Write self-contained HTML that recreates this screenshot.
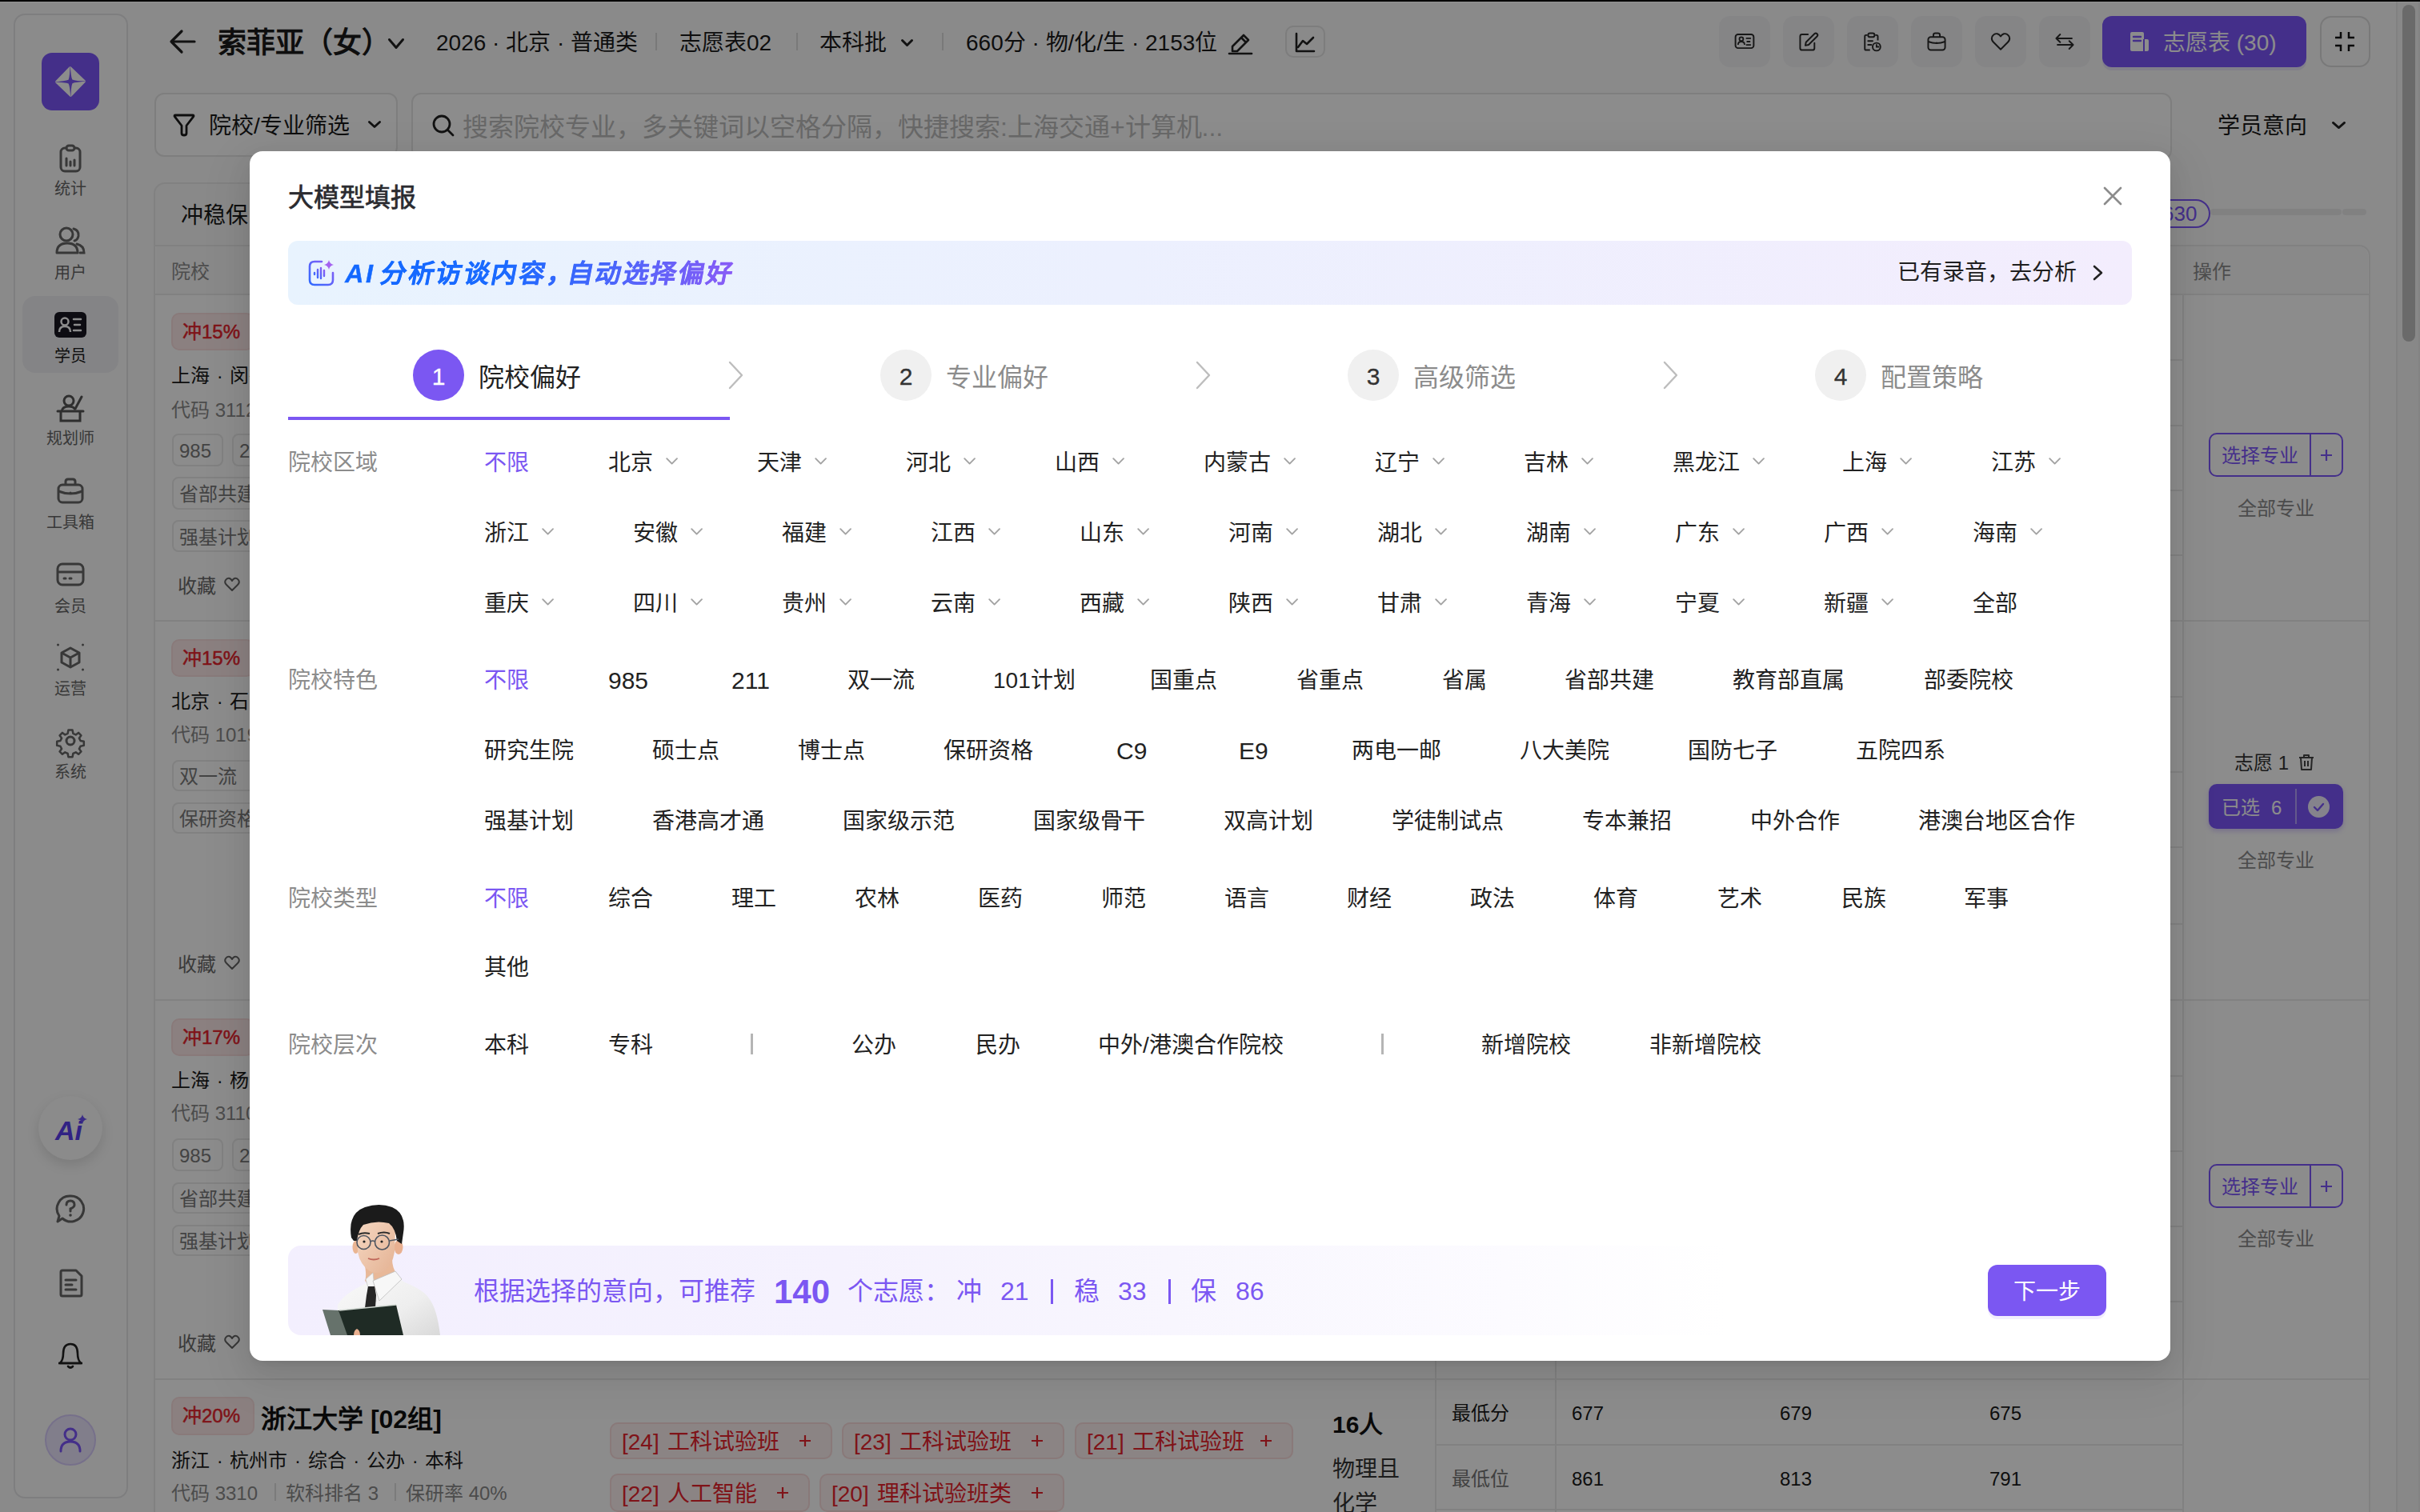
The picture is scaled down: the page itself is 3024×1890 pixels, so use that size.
<!DOCTYPE html><html lang="zh-CN"><head><meta charset="utf-8"><style>
*{box-sizing:border-box;margin:0;padding:0}
html,body{width:3024px;height:1890px;overflow:hidden;background:#fbfbfc}
body{position:relative;font-family:"Liberation Sans",sans-serif;color:#1f1f1f;font-size:28px;line-height:40px}
.a{position:absolute;white-space:nowrap}
.t28{font-size:28px;line-height:40px}
.t32{font-size:32px;line-height:40px}
svg{position:absolute;overflow:visible}
.ov{position:absolute;left:0;top:0;width:3024px;height:1890px;background:rgba(0,0,0,0.45)}
.modal{position:absolute;left:312px;top:189px;width:2400px;height:1512px;background:#fff;border-radius:16px;overflow:hidden;box-shadow:0 12px 32px 0 rgba(0,0,0,.08),0 6px 12px -8px rgba(0,0,0,.12),0 18px 56px 16px rgba(0,0,0,.05)}
.o{position:absolute;white-space:nowrap;font-size:28px;line-height:40px;color:#222}
.lab{position:absolute;white-space:nowrap;font-size:28px;line-height:40px;color:#8c8c8c}
.hl{position:absolute;background:#ececec;height:2px}
.vl{position:absolute;background:#ececec;width:2px}
.tag{position:absolute;border:2px solid #e8e8e8;border-radius:8px;color:#777;font-size:28px;line-height:37px;padding:0 12px;white-space:nowrap}
</style></head><body>
<div class="a" style="left:0;top:0;width:3024px;height:2px;background:#000;z-index:5"></div>
<div class="a" style="left:17px;top:17px;width:143px;height:1856px;border:2px solid #e6e6e8;border-radius:14px;background:#fdfdfd"></div>
<div class="a" style="left:52px;top:66px;width:72px;height:72px;background:#7c56fa;border-radius:13px"></div>
<svg style="left:52px;top:66px" width="72" height="72" viewBox="0 0 72 72"><g transform="rotate(-1 36 36)"><path d="M36 18.5 L53.5 36 L36 53.5 L18.5 36 Z" fill="#fff" stroke="#fff" stroke-width="3" stroke-linejoin="round"/><path d="M36 14 Q36.6 30 38.4 33.6 Q42 35.4 58 36 Q42 36.6 38.4 38.4 Q36.6 42 36 58 Q35.4 42 33.6 38.4 Q30 36.6 14 36 Q30 35.4 33.6 33.6 Q35.4 30 36 14Z" fill="#7c56fa"/></g></svg>
<div class="a" style="left:28px;top:370px;width:120px;height:96px;background:#f1f1f4;border-radius:16px"></div>
<div class="a" style="left:17px;width:142px;text-align:center;top:216px;font-size:20px;line-height:40px;color:#666">统计</div>
<svg style="left:73px;top:180px" width="30" height="36" viewBox="0 0 30 36"><rect x="3" y="5" width="24" height="29" rx="5" fill="none" stroke="#666" stroke-width="3"/><rect x="10" y="2" width="10" height="6" rx="3" fill="#fdfdfd" stroke="#666" stroke-width="3"/><path d="M10 18v9M15 22v5M20 20v7" stroke="#666" stroke-width="3" stroke-linecap="round"/></svg>
<div class="a" style="left:17px;width:142px;text-align:center;top:321px;font-size:20px;line-height:40px;color:#666">用户</div>
<svg style="left:69px;top:283px" width="38" height="38" viewBox="0 0 38 38"><circle cx="14" cy="10" r="8" fill="none" stroke="#666" stroke-width="3"/><path d="M2 33 Q2 21 15 21 Q28 21 28 33 Z" fill="none" stroke="#666" stroke-width="3" stroke-linejoin="round"/><path d="M23 3 Q30 5 29 12 Q28 17 24 18" fill="none" stroke="#666" stroke-width="3" stroke-linecap="round"/><path d="M27 22 Q36 24 36 33 L31 33" fill="none" stroke="#666" stroke-width="3" stroke-linecap="round"/></svg>
<div class="a" style="left:17px;width:142px;text-align:center;top:425px;font-size:20px;line-height:40px;color:#1a1a1a">学员</div>
<svg style="left:68px;top:390px" width="40" height="32" viewBox="0 0 40 32"><rect x="0" y="0" width="40" height="32" rx="6" fill="#181622"/><circle cx="13" cy="12" r="4.5" fill="none" stroke="#fff" stroke-width="2.5"/><path d="M6 25 Q6 18 13 18 Q20 18 20 25" fill="none" stroke="#fff" stroke-width="2.5"/><path d="M24 9h9M25 16h7M24 23h9" stroke="#fff" stroke-width="2.5" stroke-linecap="round"/></svg>
<div class="a" style="left:17px;width:142px;text-align:center;top:528px;font-size:20px;line-height:40px;color:#666">规划师</div>
<svg style="left:70px;top:493px" width="36" height="36" viewBox="0 0 36 36"><circle cx="16" cy="8" r="6" fill="none" stroke="#555" stroke-width="3"/><path d="M7 21 Q8 15 16 15 Q22 15 24 19" fill="none" stroke="#555" stroke-width="3"/><path d="M24 18 L32 3" stroke="#555" stroke-width="3" stroke-linecap="round"/><path d="M2 21h32" stroke="#555" stroke-width="3" stroke-linecap="round"/><path d="M6 21v12h24v-12" fill="none" stroke="#555" stroke-width="3"/></svg>
<div class="a" style="left:17px;width:142px;text-align:center;top:633px;font-size:20px;line-height:40px;color:#666">工具箱</div>
<svg style="left:71px;top:597px" width="34" height="33" viewBox="0 0 34 33"><rect x="2" y="9" width="30" height="22" rx="5" fill="none" stroke="#666" stroke-width="3"/><path d="M11 9V5Q11 2 14 2h6q3 0 3 3v4" fill="none" stroke="#666" stroke-width="3"/><path d="M2 17 Q17 23 32 17" fill="none" stroke="#666" stroke-width="3"/><circle cx="17" cy="19" r="1.5" fill="#666"/></svg>
<div class="a" style="left:17px;width:142px;text-align:center;top:738px;font-size:20px;line-height:40px;color:#666">会员</div>
<svg style="left:70px;top:703px" width="36" height="30" viewBox="0 0 36 30"><rect x="2" y="2" width="32" height="26" rx="6" fill="none" stroke="#666" stroke-width="3"/><path d="M2 12h32" stroke="#666" stroke-width="3"/><path d="M10 20h2M17 20h2" stroke="#666" stroke-width="3" stroke-linecap="round"/></svg>
<div class="a" style="left:17px;width:142px;text-align:center;top:841px;font-size:20px;line-height:40px;color:#666">运营</div>
<svg style="left:71px;top:804px" width="34" height="35" viewBox="0 0 34 35"><path d="M17 6 L28 12 L28 24 L17 30 L6 24 L6 12 Z" fill="none" stroke="#666" stroke-width="3" stroke-linejoin="round"/><path d="M6 12 L17 18 L28 12 M17 18 V30" fill="none" stroke="#666" stroke-width="3" stroke-linejoin="round"/><circle cx="1.5" cy="2" r="1.5" fill="#666"/><circle cx="32.5" cy="2" r="1.5" fill="#666"/><circle cx="1.5" cy="33" r="1.5" fill="#666"/><circle cx="32.5" cy="33" r="1.5" fill="#666"/></svg>
<div class="a" style="left:17px;width:142px;text-align:center;top:945px;font-size:20px;line-height:40px;color:#666">系统</div>
<svg style="left:70px;top:908px" width="36" height="36" viewBox="0 0 36 36"><path d="M15 2h6l1 5 4 2 4-3 4 4-3 4 2 4 5 1v6l-5 1-2 4 3 4-4 4-4-3-4 2-1 5h-6l-1-5-4-2-4 3-4-4 3-4-2-4-5-1v-6l5-1 2-4-3-4 4-4 4 3 4-2z" fill="none" stroke="#666" stroke-width="3" stroke-linejoin="round" transform="translate(18 18) scale(0.84) translate(-18 -18)"/><circle cx="18" cy="18" r="5" fill="none" stroke="#666" stroke-width="3"/></svg>
<div class="a" style="left:48px;top:1370px;width:80px;height:80px;background:#fdfdfd;border-radius:50%;box-shadow:0 6px 16px rgba(0,0,0,0.12)"></div>
<div class="a" style="left:69px;top:1393px;font-size:34px;line-height:40px;font-weight:bold;font-style:italic;color:#5a3ff0">Ai</div>
<svg style="left:97px;top:1393px" width="12" height="12" viewBox="0 0 14 14"><path d="M7 0 Q8 6 14 7 Q8 8 7 14 Q6 8 0 7 Q6 6 7 0Z" fill="#6a4ff5"/></svg>
<svg style="left:70px;top:1493px" width="36" height="36" viewBox="0 0 36 36"><path d="M18 2 A16 16 0 1 1 8 30 L2 34 L4 27 A16 16 0 0 1 18 2Z" fill="none" stroke="#666" stroke-width="3" stroke-linejoin="round"/><path d="M13 13 Q13 8 18 8 Q23 8 23 13 Q23 16 18 18 V21" fill="none" stroke="#666" stroke-width="3" stroke-linecap="round"/><circle cx="18" cy="26" r="1.8" fill="#666"/></svg>
<svg style="left:73px;top:1586px" width="31" height="36" viewBox="0 0 31 36"><path d="M3 4 Q3 2 5 2 H22 L29 9 V32 Q29 34 27 34 H5 Q3 34 3 32Z" fill="none" stroke="#666" stroke-width="3" stroke-linejoin="round"/><path d="M9 14h13M9 20h8M9 26h13" stroke="#666" stroke-width="3" stroke-linecap="round"/></svg>
<svg style="left:71px;top:1676px" width="34" height="36" viewBox="0 0 34 36"><path d="M4 28 Q8 24 8 16 Q8 4 17 4 Q26 4 26 16 Q26 24 30 28 Z" fill="none" stroke="#222" stroke-width="2.6" stroke-linejoin="round"/><path d="M2 28h30" stroke="#222" stroke-width="2.6"/><path d="M14 32 Q17 35 20 32" fill="none" stroke="#222" stroke-width="2.6" stroke-linecap="round"/></svg>
<div class="a" style="left:56px;top:1768px;width:64px;height:64px;background:#ece6fe;border:2px solid #d8ccfc;border-radius:50%"></div>
<svg style="left:74px;top:1784px" width="28" height="32" viewBox="0 0 28 32"><circle cx="14" cy="9" r="7" fill="none" stroke="#7c56fa" stroke-width="3"/><path d="M2 30 Q2 18 14 18 Q26 18 26 30" fill="none" stroke="#7c56fa" stroke-width="3" stroke-linecap="round"/></svg>
<svg style="left:211px;top:36px" width="34" height="32" viewBox="0 0 34 32"><path d="M32 16H3M16 3L3 16L16 29" fill="none" stroke="#222" stroke-width="3.2" stroke-linecap="round" stroke-linejoin="round"/></svg>
<div class="a" style="left:272px;top:34.0px;font-size:36px;line-height:40px;color:#1a1a1a;font-weight:bold;">索菲亚（女）</div>
<svg style="left:485px;top:48px" width="20" height="13"><polyline points="1.5,1.5 10.0,11.5 18.5,1.5" fill="none" stroke="#222" stroke-width="3" stroke-linecap="round" stroke-linejoin="round"/></svg>
<div class="a" style="left:545px;top:34.0px;font-size:28px;line-height:40px;color:#1a1a1a;font-weight:normal;">2026 · 北京 · 普通类</div>
<div class="a" style="left:819px;top:41px;width:2px;height:22px;background:#ddd"></div>
<div class="a" style="left:995px;top:41px;width:2px;height:22px;background:#ddd"></div>
<div class="a" style="left:1177px;top:41px;width:2px;height:22px;background:#ddd"></div>
<div class="a" style="left:849px;top:34.0px;font-size:28px;line-height:40px;color:#1a1a1a;font-weight:normal;">志愿表02</div>
<div class="a" style="left:1024px;top:34.0px;font-size:28px;line-height:40px;color:#1a1a1a;font-weight:normal;">本科批</div>
<svg style="left:1126px;top:49px" width="15" height="9"><polyline points="1.5,1.5 7.5,7.5 13.5,1.5" fill="none" stroke="#222" stroke-width="3" stroke-linecap="round" stroke-linejoin="round"/></svg>
<div class="a" style="left:1207px;top:34.0px;font-size:28px;line-height:40px;color:#1a1a1a;font-weight:normal;">660分 · 物/化/生 · 2153位</div>
<svg style="left:1534px;top:36px" width="32" height="32" viewBox="0 0 32 32"><path d="M6 22 L20 8 L26 14 L12 28 H6 Z" fill="none" stroke="#222" stroke-width="2.6" stroke-linejoin="round"/><path d="M17 11 L23 17" stroke="#222" stroke-width="2.6"/><path d="M2 31h28" stroke="#222" stroke-width="2.6" stroke-linecap="round"/></svg>
<div class="a" style="left:1606px;top:32px;width:50px;height:40px;border:2px solid #e3e3e3;border-radius:10px"></div>
<svg style="left:1618px;top:40px" width="26" height="26" viewBox="0 0 26 26"><path d="M2 2V24H24" fill="none" stroke="#222" stroke-width="2.6" stroke-linecap="round" stroke-linejoin="round"/><path d="M4 19 L10 11 L15 15 L23 7" fill="none" stroke="#222" stroke-width="2.6" stroke-linecap="round" stroke-linejoin="round"/></svg>
<div class="a" style="left:2148px;top:20px;width:64px;height:64px;background:#f3f3f5;border-radius:14px"></div>
<div class="a" style="left:2228px;top:20px;width:64px;height:64px;background:#f3f3f5;border-radius:14px"></div>
<div class="a" style="left:2308px;top:20px;width:64px;height:64px;background:#f3f3f5;border-radius:14px"></div>
<div class="a" style="left:2388px;top:20px;width:64px;height:64px;background:#f3f3f5;border-radius:14px"></div>
<div class="a" style="left:2468px;top:20px;width:64px;height:64px;background:#f3f3f5;border-radius:14px"></div>
<div class="a" style="left:2548px;top:20px;width:64px;height:64px;background:#f3f3f5;border-radius:14px"></div>
<svg style="left:2167px;top:39px" width="26" height="26" viewBox="0 0 32 32"><rect x="2" y="5" width="28" height="21" rx="4" fill="none" stroke="#2a2a2a" stroke-width="2.4"/><circle cx="11" cy="12" r="3" fill="none" stroke="#2a2a2a" stroke-width="2.2"/><path d="M6 21 Q6 16 11 16 Q16 16 16 21" fill="none" stroke="#2a2a2a" stroke-width="2.2"/><path d="M19 11h6M20 16h4M19 21h6" stroke="#2a2a2a" stroke-width="2.2" stroke-linecap="round"/></svg>
<svg style="left:2247px;top:39px" width="26" height="26" viewBox="0 0 32 32"><path d="M15 5H6Q3 5 3 8V26Q3 29 6 29H22Q25 29 25 26V18" fill="none" stroke="#2a2a2a" stroke-width="2.4" stroke-linecap="round"/><path d="M11 22 L12 17 L25 4 Q27 2 29 4 Q31 6 29 8 L16 21 Z" fill="none" stroke="#2a2a2a" stroke-width="2.4" stroke-linejoin="round"/></svg>
<svg style="left:2327px;top:39px" width="26" height="26" viewBox="0 0 32 32"><path d="M8 6H6Q4 6 4 8V27Q4 29 6 29H12" fill="none" stroke="#2a2a2a" stroke-width="2.4"/><path d="M20 6H22Q24 6 24 8V14" fill="none" stroke="#2a2a2a" stroke-width="2.4"/><rect x="9" y="3" width="10" height="6" rx="3" fill="none" stroke="#2a2a2a" stroke-width="2.4"/><path d="M9 15h7M9 21h5" stroke="#2a2a2a" stroke-width="2.4" stroke-linecap="round"/><circle cx="22" cy="24" r="6" fill="none" stroke="#2a2a2a" stroke-width="2.4"/><path d="M22 20v4h4" fill="none" stroke="#2a2a2a" stroke-width="2.2"/></svg>
<svg style="left:2407px;top:39px" width="26" height="26" viewBox="0 0 32 32"><rect x="3" y="9" width="26" height="20" rx="4" fill="none" stroke="#2a2a2a" stroke-width="2.4"/><path d="M11 9V6Q11 3 14 3h4q3 0 3 3v3" fill="none" stroke="#2a2a2a" stroke-width="2.4"/><path d="M3 16 Q16 21 29 16" fill="none" stroke="#2a2a2a" stroke-width="2.4"/><circle cx="16" cy="18" r="1.3" fill="#2a2a2a"/></svg>
<svg style="left:2487px;top:39px" width="26" height="26" viewBox="0 0 32 32"><path d="M16 28 L5 17 Q1 13 3 8 Q6 3 11 4 Q14 5 16 8 Q18 5 21 4 Q26 3 29 8 Q31 13 27 17 Z" fill="none" stroke="#2a2a2a" stroke-width="2.4" stroke-linejoin="round"/></svg>
<svg style="left:2567px;top:39px" width="26" height="26" viewBox="0 0 32 32"><path d="M4 11H27M9 5 L3 11 L9 17" fill="none" stroke="#2a2a2a" stroke-width="2.4" stroke-linecap="round" stroke-linejoin="round"/><path d="M28 21H5M23 15 L29 21 L23 27" fill="none" stroke="#2a2a2a" stroke-width="2.4" stroke-linecap="round" stroke-linejoin="round"/></svg>
<div class="a" style="left:2627px;top:20px;width:255px;height:64px;background:#7d57fc;border-radius:12px;box-shadow:0 4px 0 rgba(125,87,252,0.12)"></div>
<svg style="left:2660px;top:39px" width="26" height="26" viewBox="0 0 26 26"><path d="M2 3Q2 1 4 1H17Q19 1 19 3V10H23Q25 10 25 12V23Q25 25 23 25H4Q2 25 2 23Z" fill="#fff"/><path d="M6 7h9M6 12h9" stroke="#7d57fc" stroke-width="2.4" stroke-linecap="round"/><path d="M19 10V25" stroke="#7d57fc" stroke-width="2"/></svg>
<div class="a" style="left:2703px;top:34.0px;font-size:28px;line-height:40px;color:#fff;font-weight:normal;">志愿表 (30)</div>
<div class="a" style="left:2899px;top:20px;width:63px;height:64px;border:2px solid #dcdcdc;border-radius:14px"></div>
<svg style="left:2916px;top:38px" width="28" height="28" viewBox="0 0 28 28"><path d="M9 2V9H2M19 2V9H26M9 26V19H2M19 26V19H26" fill="none" stroke="#111" stroke-width="2.5"/></svg>
<div class="a" style="left:2995px;top:0px;width:29px;height:1890px;background:#f8f8f8"></div>
<div class="a" style="left:2994px;top:0px;width:2px;height:1890px;background:#ececec"></div>
<div class="a" style="left:3022px;top:0px;width:2px;height:1890px;background:#eeeeee"></div>
<div class="a" style="left:3002px;top:6px;width:16px;height:421px;background:#c2c2c2;border-radius:8px"></div>
<div class="a" style="left:193px;top:116px;width:304px;height:80px;border:2px solid #e6e6e6;border-radius:12px;background:#fff"></div>
<svg style="left:216px;top:141px" width="28" height="30" viewBox="0 0 28 30"><path d="M3.5 3 Q1 3 2.6 5.2 L11 16 V25.5 Q11 28 14 28 Q17 28 17 25.5 V16 L25.4 5.2 Q27 3 24.5 3 Z" fill="none" stroke="#1a1a1a" stroke-width="2.8" stroke-linejoin="round"/></svg>
<div class="a" style="left:261px;top:138.0px;font-size:28px;line-height:40px;color:#1a1a1a;font-weight:normal;">院校/专业筛选</div>
<svg style="left:460px;top:151px" width="16" height="9"><polyline points="1.4,1.4 8.0,7.6 14.6,1.4" fill="none" stroke="#222" stroke-width="2.8" stroke-linecap="round" stroke-linejoin="round"/></svg>
<div class="a" style="left:514px;top:116px;width:2200px;height:84px;border:2px solid #e6e6e6;border-radius:12px;background:#fff"></div>
<svg style="left:540px;top:143px" width="28" height="28" viewBox="0 0 28 28"><circle cx="12" cy="12" r="10" fill="none" stroke="#222" stroke-width="2.8"/><path d="M19.5 19.5L26 26" stroke="#222" stroke-width="2.8" stroke-linecap="round"/></svg>
<div class="a" style="left:578px;top:138.5px;font-size:32px;line-height:40px;color:#bdbdbd;font-weight:normal;">搜索院校专业，多关键词以空格分隔，快捷搜索:上海交通+计算机...</div>
<div class="a" style="left:2771px;top:138.0px;font-size:28px;line-height:40px;color:#1a1a1a;font-weight:normal;">学员意向</div>
<svg style="left:2914px;top:152px" width="17" height="9"><polyline points="1.4,1.4 8.5,7.6 15.6,1.4" fill="none" stroke="#222" stroke-width="2.8" stroke-linecap="round" stroke-linejoin="round"/></svg>
<div class="a" style="left:192px;top:228px;width:2508px;height:172px;border:2px solid #ececec;border-bottom:none;border-radius:14px 14px 0 0;background:#fafafa"></div>
<div class="a" style="left:226px;top:249.5px;font-size:28px;line-height:40px;color:#1a1a1a;font-weight:normal;">冲稳保</div>
<div class="a" style="left:2640px;top:249px;width:122px;height:36px;border:2px solid #7d57fc;border-radius:18px;background:#fff"></div>
<div class="a" style="left:2702px;top:246.5px;font-size:26px;line-height:40px;color:#7d57fc;font-weight:normal;">630</div>
<div class="a" style="left:2762px;top:261px;width:164px;height:8px;background:#ececec;border-radius:4px"></div>
<div class="a" style="left:2927px;top:261px;width:30px;height:8px;background:#ececec;border-radius:4px"></div>
<div class="a" style="left:192px;top:306px;width:2770px;height:1594px;border:2px solid #ececec;border-radius:0 14px 0 0;background:#fff"></div>
<div class="a" style="left:195px;top:308px;width:2764px;height:60px;background:#fafafa;border-radius:0 12px 0 0"></div>
<div class="a" style="left:192px;top:367px;width:2769px;height:2px;background:#ececec"></div>
<div class="a" style="left:214px;top:320.0px;font-size:24px;line-height:40px;color:#8c8c8c;font-weight:normal;">院校</div>
<div class="a" style="left:2740px;top:320.0px;font-size:24px;line-height:40px;color:#8c8c8c;font-weight:normal;">操作</div>
<div class="a" style="left:1793px;top:369px;width:2px;height:1521px;background:#ececec"></div>
<div class="a" style="left:1943px;top:369px;width:2px;height:1521px;background:#ececec"></div>
<div class="a" style="left:2727px;top:369px;width:2px;height:1521px;background:#ececec"></div>
<div class="a" style="left:192px;top:775px;width:2769px;height:2px;background:#ececec"></div>
<div class="a" style="left:192px;top:1249px;width:2769px;height:2px;background:#ececec"></div>
<div class="a" style="left:192px;top:1723px;width:2769px;height:2px;background:#ececec"></div>
<div class="a" style="left:1794px;top:449px;width:934px;height:2px;background:#ececec"></div>
<div class="a" style="left:1794px;top:530.5px;width:934px;height:2.0px;background:#ececec"></div>
<div class="a" style="left:1794px;top:611.5px;width:934px;height:2.0px;background:#ececec"></div>
<div class="a" style="left:1794px;top:693px;width:934px;height:2px;background:#ececec"></div>
<div class="a" style="left:1794px;top:870px;width:934px;height:2px;background:#ececec"></div>
<div class="a" style="left:1794px;top:964px;width:934px;height:2px;background:#ececec"></div>
<div class="a" style="left:1794px;top:1058px;width:934px;height:2px;background:#ececec"></div>
<div class="a" style="left:1794px;top:1154px;width:934px;height:2px;background:#ececec"></div>
<div class="a" style="left:1794px;top:1344px;width:934px;height:2px;background:#ececec"></div>
<div class="a" style="left:1794px;top:1438px;width:934px;height:2px;background:#ececec"></div>
<div class="a" style="left:1794px;top:1532px;width:934px;height:2px;background:#ececec"></div>
<div class="a" style="left:1794px;top:1626px;width:934px;height:2px;background:#ececec"></div>
<div class="a" style="left:1794px;top:1805px;width:934px;height:2px;background:#ececec"></div>
<div class="a" style="left:1794px;top:1886px;width:934px;height:2px;background:#ececec"></div>
<div class="a" style="left:214px;top:391px;width:104px;height:47px;background:#fdeaea;border:2px solid #f9dede;border-radius:10px"></div>
<div class="a" style="left:228px;top:394.5px;font-size:24px;line-height:40px;color:#e8232d;font-weight:normal;-webkit-text-stroke:0.5px #e8232d">冲15%</div>
<div class="a" style="left:214px;top:449.5px;font-size:24px;line-height:40px;color:#1a1a1a;font-weight:normal;word-spacing:2px">上海 · 闵行区 · 综合 · 公办</div>
<div class="a" style="left:214px;top:492.5px;font-size:24px;line-height:40px;color:#8a8a8a;font-weight:normal;">代码 3112</div>
<div class="a" style="left:215px;top:542px;width:64px;height:41px;border:2px solid #ebebeb;border-radius:8px;background:#fff"></div>
<div class="a" style="left:224px;top:544.0px;font-size:24px;line-height:40px;color:#7a7a7a;font-weight:normal;">985</div>
<div class="a" style="left:290px;top:542px;width:64px;height:41px;border:2px solid #ebebeb;border-radius:8px;background:#fff"></div>
<div class="a" style="left:299px;top:544.0px;font-size:24px;line-height:40px;color:#7a7a7a;font-weight:normal;">211</div>
<div class="a" style="left:215px;top:596px;width:134px;height:41px;border:2px solid #ebebeb;border-radius:8px;background:#fff"></div>
<div class="a" style="left:224px;top:598.0px;font-size:24px;line-height:40px;color:#7a7a7a;font-weight:normal;">省部共建</div>
<div class="a" style="left:215px;top:650px;width:134px;height:40px;border:2px solid #ebebeb;border-radius:8px;background:#fff"></div>
<div class="a" style="left:224px;top:651.5px;font-size:24px;line-height:40px;color:#7a7a7a;font-weight:normal;">强基计划</div>
<div class="a" style="left:222px;top:712.5px;font-size:24px;line-height:40px;color:#6a6a6a;font-weight:normal;">收藏</div>
<svg style="left:280px;top:721px" width="20" height="20" viewBox="0 0 20 20"><path d="M10 17 L3 10 Q0 7 2 4 Q4 1 7 2 Q9 3 10 5 Q11 3 13 2 Q16 1 18 4 Q20 7 17 10 Z" fill="none" stroke="#666" stroke-width="2" stroke-linejoin="round"/></svg>
<div class="a" style="left:214px;top:799px;width:104px;height:47px;background:#fdeaea;border:2px solid #f9dede;border-radius:10px"></div>
<div class="a" style="left:228px;top:802.5px;font-size:24px;line-height:40px;color:#e8232d;font-weight:normal;-webkit-text-stroke:0.5px #e8232d">冲15%</div>
<div class="a" style="left:214px;top:857.0px;font-size:24px;line-height:40px;color:#1a1a1a;font-weight:normal;word-spacing:2px">北京 · 石景山区 · 理工 · 公办</div>
<div class="a" style="left:214px;top:898.5px;font-size:24px;line-height:40px;color:#8a8a8a;font-weight:normal;">代码 1019</div>
<div class="a" style="left:215px;top:950px;width:115px;height:39px;border:2px solid #ebebeb;border-radius:8px;background:#fff"></div>
<div class="a" style="left:224px;top:951.0px;font-size:24px;line-height:40px;color:#7a7a7a;font-weight:normal;">双一流</div>
<div class="a" style="left:215px;top:1003px;width:134px;height:39px;border:2px solid #ebebeb;border-radius:8px;background:#fff"></div>
<div class="a" style="left:224px;top:1004.0px;font-size:24px;line-height:40px;color:#7a7a7a;font-weight:normal;">保研资格</div>
<div class="a" style="left:222px;top:1185.5px;font-size:24px;line-height:40px;color:#6a6a6a;font-weight:normal;">收藏</div>
<svg style="left:280px;top:1194px" width="20" height="20" viewBox="0 0 20 20"><path d="M10 17 L3 10 Q0 7 2 4 Q4 1 7 2 Q9 3 10 5 Q11 3 13 2 Q16 1 18 4 Q20 7 17 10 Z" fill="none" stroke="#666" stroke-width="2" stroke-linejoin="round"/></svg>
<div class="a" style="left:214px;top:1273px;width:104px;height:47px;background:#fdeaea;border:2px solid #f9dede;border-radius:10px"></div>
<div class="a" style="left:228px;top:1276.5px;font-size:24px;line-height:40px;color:#e8232d;font-weight:normal;-webkit-text-stroke:0.5px #e8232d">冲17%</div>
<div class="a" style="left:214px;top:1331.0px;font-size:24px;line-height:40px;color:#1a1a1a;font-weight:normal;word-spacing:2px">上海 · 杨浦区 · 综合 · 公办</div>
<div class="a" style="left:214px;top:1372.0px;font-size:24px;line-height:40px;color:#8a8a8a;font-weight:normal;">代码 3110</div>
<div class="a" style="left:215px;top:1423px;width:64px;height:41px;border:2px solid #ebebeb;border-radius:8px;background:#fff"></div>
<div class="a" style="left:224px;top:1425.0px;font-size:24px;line-height:40px;color:#7a7a7a;font-weight:normal;">985</div>
<div class="a" style="left:290px;top:1423px;width:64px;height:41px;border:2px solid #ebebeb;border-radius:8px;background:#fff"></div>
<div class="a" style="left:299px;top:1425.0px;font-size:24px;line-height:40px;color:#7a7a7a;font-weight:normal;">211</div>
<div class="a" style="left:215px;top:1478px;width:134px;height:39px;border:2px solid #ebebeb;border-radius:8px;background:#fff"></div>
<div class="a" style="left:224px;top:1479.0px;font-size:24px;line-height:40px;color:#7a7a7a;font-weight:normal;">省部共建</div>
<div class="a" style="left:215px;top:1531px;width:134px;height:39px;border:2px solid #ebebeb;border-radius:8px;background:#fff"></div>
<div class="a" style="left:224px;top:1532.0px;font-size:24px;line-height:40px;color:#7a7a7a;font-weight:normal;">强基计划</div>
<div class="a" style="left:222px;top:1660.0px;font-size:24px;line-height:40px;color:#6a6a6a;font-weight:normal;">收藏</div>
<svg style="left:280px;top:1668px" width="20" height="20" viewBox="0 0 20 20"><path d="M10 17 L3 10 Q0 7 2 4 Q4 1 7 2 Q9 3 10 5 Q11 3 13 2 Q16 1 18 4 Q20 7 17 10 Z" fill="none" stroke="#666" stroke-width="2" stroke-linejoin="round"/></svg>
<div class="a" style="left:214px;top:1746px;width:104px;height:48px;background:#fdeaea;border:2px solid #f9dede;border-radius:10px"></div>
<div class="a" style="left:228px;top:1750.0px;font-size:24px;line-height:40px;color:#e8232d;font-weight:normal;-webkit-text-stroke:0.5px #e8232d">冲20%</div>
<div class="a" style="left:326px;top:1753.5px;font-size:32px;line-height:40px;color:#111;font-weight:bold;">浙江大学 [02组]</div>
<div class="a" style="left:214px;top:1805.5px;font-size:24px;line-height:40px;color:#1a1a1a;font-weight:normal;word-spacing:2px">浙江 · 杭州市 · 综合 · 公办 · 本科</div>
<div class="a" style="left:214px;top:1846.5px;font-size:24px;line-height:40px;color:#8a8a8a;font-weight:normal;">代码 3310</div>
<div class="a" style="left:343px;top:1854px;width:2px;height:22px;background:#e0e0e0"></div>
<div class="a" style="left:357px;top:1846.5px;font-size:24px;line-height:40px;color:#8a8a8a;font-weight:normal;">软科排名 3</div>
<div class="a" style="left:493px;top:1854px;width:2px;height:22px;background:#e0e0e0"></div>
<div class="a" style="left:507px;top:1846.5px;font-size:24px;line-height:40px;color:#8a8a8a;font-weight:normal;">保研率 40%</div>
<div class="a" style="left:762px;top:1778px;width:278px;height:46px;background:#fdf0f0;border:2px solid #f9dcdc;border-radius:10px"></div>
<div class="a" style="left:777px;top:1782.5px;font-size:28px;line-height:40px;color:#e8232d;font-weight:normal;word-spacing:3px">[24] 工科试验班</div>
<svg style="left:998px;top:1793.0px" width="16" height="16" viewBox="0 0 16 16"><path d="M8 1V15M1 8H15" stroke="#e8232d" stroke-width="2.2"/></svg>
<div class="a" style="left:1052px;top:1778px;width:278px;height:46px;background:#fdf0f0;border:2px solid #f9dcdc;border-radius:10px"></div>
<div class="a" style="left:1067px;top:1782.5px;font-size:28px;line-height:40px;color:#e8232d;font-weight:normal;word-spacing:3px">[23] 工科试验班</div>
<svg style="left:1288px;top:1793.0px" width="16" height="16" viewBox="0 0 16 16"><path d="M8 1V15M1 8H15" stroke="#e8232d" stroke-width="2.2"/></svg>
<div class="a" style="left:1343px;top:1778px;width:273px;height:46px;background:#fdf0f0;border:2px solid #f9dcdc;border-radius:10px"></div>
<div class="a" style="left:1358px;top:1782.5px;font-size:28px;line-height:40px;color:#e8232d;font-weight:normal;word-spacing:3px">[21] 工科试验班</div>
<svg style="left:1574px;top:1793.0px" width="16" height="16" viewBox="0 0 16 16"><path d="M8 1V15M1 8H15" stroke="#e8232d" stroke-width="2.2"/></svg>
<div class="a" style="left:762px;top:1842px;width:250px;height:48px;background:#fdf0f0;border:2px solid #f9dcdc;border-radius:10px"></div>
<div class="a" style="left:777px;top:1847.5px;font-size:28px;line-height:40px;color:#e8232d;font-weight:normal;word-spacing:3px">[22] 人工智能</div>
<svg style="left:970px;top:1858.0px" width="16" height="16" viewBox="0 0 16 16"><path d="M8 1V15M1 8H15" stroke="#e8232d" stroke-width="2.2"/></svg>
<div class="a" style="left:1024px;top:1842px;width:306px;height:48px;background:#fdf0f0;border:2px solid #f9dcdc;border-radius:10px"></div>
<div class="a" style="left:1039px;top:1847.5px;font-size:28px;line-height:40px;color:#e8232d;font-weight:normal;word-spacing:3px">[20] 理科试验班类</div>
<svg style="left:1288px;top:1858.0px" width="16" height="16" viewBox="0 0 16 16"><path d="M8 1V15M1 8H15" stroke="#e8232d" stroke-width="2.2"/></svg>
<div class="a" style="left:1665px;top:1760.5px;font-size:30px;line-height:40px;color:#111;font-weight:bold;">16人</div>
<div class="a" style="left:1665px;top:1817.0px;font-size:28px;line-height:40px;color:#333;font-weight:normal;">物理且</div>
<div class="a" style="left:1665px;top:1859.5px;font-size:28px;line-height:40px;color:#333;font-weight:normal;">化学</div>
<div class="a" style="left:1814px;top:1746.5px;font-size:24px;line-height:40px;color:#1a1a1a;font-weight:normal;">最低分</div>
<div class="a" style="left:1814px;top:1828.5px;font-size:24px;line-height:40px;color:#777;font-weight:normal;">最低位</div>
<div class="a" style="left:1964px;top:1746.5px;font-size:24px;line-height:40px;color:#1a1a1a;font-weight:normal;">677</div>
<div class="a" style="left:1964px;top:1828.5px;font-size:24px;line-height:40px;color:#1a1a1a;font-weight:normal;">861</div>
<div class="a" style="left:2224px;top:1746.5px;font-size:24px;line-height:40px;color:#1a1a1a;font-weight:normal;">679</div>
<div class="a" style="left:2224px;top:1828.5px;font-size:24px;line-height:40px;color:#1a1a1a;font-weight:normal;">813</div>
<div class="a" style="left:2486px;top:1746.5px;font-size:24px;line-height:40px;color:#1a1a1a;font-weight:normal;">675</div>
<div class="a" style="left:2486px;top:1828.5px;font-size:24px;line-height:40px;color:#1a1a1a;font-weight:normal;">791</div>
<div class="a" style="left:2760px;top:541px;width:168px;height:55px;border:2px solid #7d57fc;border-radius:10px;background:#fff"></div>
<div class="a" style="left:2886px;top:541px;width:2px;height:55px;background:#7d57fc"></div>
<div class="a" style="left:2776px;top:550.0px;font-size:24px;line-height:40px;color:#7d57fc;font-weight:normal;">选择专业</div>
<svg style="left:2899px;top:560.5px" width="16" height="16" viewBox="0 0 16 16"><path d="M8 1V15M1 8H15" stroke="#7d57fc" stroke-width="2.2"/></svg>
<div class="a" style="left:2796px;top:616.0px;font-size:24px;line-height:40px;color:#8a8a8a;font-weight:normal;">全部专业</div>
<div class="a" style="left:2792px;top:934.0px;font-size:24px;line-height:40px;color:#333;font-weight:normal;">志愿 1</div>
<svg style="left:2871px;top:942px" width="22" height="22" viewBox="0 0 22 22"><path d="M2 5H20M8 5V2H14V5M4 5L5 20H17L18 5" fill="none" stroke="#444" stroke-width="2" stroke-linejoin="round"/><path d="M9 9V16M13 9V16" stroke="#444" stroke-width="2"/></svg>
<div class="a" style="left:2760px;top:980px;width:168px;height:56px;background:#7d57fc;border-radius:10px;box-shadow:0 3px 6px rgba(125,87,252,0.3)"></div>
<div class="a" style="left:2868px;top:986px;width:2px;height:44px;background:rgba(255,255,255,0.45)"></div>
<div class="a" style="left:2776px;top:989.5px;font-size:24px;line-height:40px;color:#fff;font-weight:normal;">已选</div>
<div class="a" style="left:2838px;top:989.5px;font-size:24px;line-height:40px;color:#fff;font-weight:normal;">6</div>
<svg style="left:2884px;top:995px" width="27" height="27" viewBox="0 0 27 27"><circle cx="13.5" cy="13.5" r="13.5" fill="#fff" fill-opacity="0.9"/><path d="M8 14 L12 18 L19 10" fill="none" stroke="#7d57fc" stroke-width="2.4" stroke-linecap="round" stroke-linejoin="round"/></svg>
<div class="a" style="left:2796px;top:1056.0px;font-size:24px;line-height:40px;color:#8a8a8a;font-weight:normal;">全部专业</div>
<div class="a" style="left:2760px;top:1455px;width:168px;height:55px;border:2px solid #7d57fc;border-radius:10px;background:#fff"></div>
<div class="a" style="left:2886px;top:1455px;width:2px;height:55px;background:#7d57fc"></div>
<div class="a" style="left:2776px;top:1464.0px;font-size:24px;line-height:40px;color:#7d57fc;font-weight:normal;">选择专业</div>
<svg style="left:2899px;top:1474.5px" width="16" height="16" viewBox="0 0 16 16"><path d="M8 1V15M1 8H15" stroke="#7d57fc" stroke-width="2.2"/></svg>
<div class="a" style="left:2796px;top:1528.5px;font-size:24px;line-height:40px;color:#8a8a8a;font-weight:normal;">全部专业</div>
<div class="ov"></div>
<div class="a" style="left:0px;top:2px;width:3024px;height:1px;background:rgba(255,255,255,0.08)"></div>
<div class="modal">
<div class="a" style="left:48px;top:38.0px;font-size:32px;line-height:40px;color:#2b2b30;font-weight:normal;-webkit-text-stroke:0.7px #2b2b30">大模型填报</div>
<svg style="left:2316px;top:44px" width="24" height="24" viewBox="0 0 24 24"><path d="M2 2L22 22M22 2L2 22" stroke="#8c8c8c" stroke-width="2.6" stroke-linecap="round"/></svg>
<div class="a" style="left:48px;top:112px;width:2304px;height:80px;border-radius:12px;background:linear-gradient(90deg,#e8f3fe 0%,#ecf0fe 45%,#f3edfd 100%)"></div>
<svg style="left:73px;top:135px" width="34" height="34" viewBox="0 0 34 34"><defs><linearGradient id="gi" x1="0" y1="1" x2="1" y2="0"><stop offset="0" stop-color="#2f6bff"/><stop offset="1" stop-color="#8f5cf4"/></linearGradient></defs><path d="M17 3H8Q2 3 2 9V26Q2 32 8 32H25Q31 32 31 26V17" fill="none" stroke="url(#gi)" stroke-width="2.6" stroke-linecap="round"/><path d="M8 17v2M12 13v10M16 11v13M20 14v7" stroke="url(#gi)" stroke-width="2.4" stroke-linecap="round"/><path d="M26 1 Q27 6 32 7 Q27 8 26 13 Q25 8 20 7 Q25 6 26 1Z" fill="#a462f0"/></svg>
<div class="a" style="left:118px;top:132.5px;font-size:32px;line-height:40px;color:#1677ff;font-weight:bold;letter-spacing:2.6px;-webkit-text-stroke:0.5px transparent;transform:skewX(-11deg);transform-origin:0 30px;background:linear-gradient(90deg,#1268ff 0%,#1a6aff 40%,#4466fb 66%,#8a5cf6 100%);-webkit-background-clip:text;background-clip:text;-webkit-text-fill-color:transparent">AI<span style="margin-left:7px"></span>分析访谈内容<span style="letter-spacing:-6px">，</span>自动选择偏好</div>
<div class="a" style="left:2059px;top:132.0px;font-size:28px;line-height:40px;color:#1f1f1f;font-weight:normal;">已有录音，去分析</div>
<svg style="left:2303px;top:142px" width="14" height="20" viewBox="0 0 14 20"><path d="M2 2L11 10L2 18" fill="none" stroke="#222" stroke-width="2.6" stroke-linecap="round" stroke-linejoin="round"/></svg>
<div class="a" style="left:204px;top:248px;width:64px;height:64px;background:#7b57f2;border-radius:50%"></div>
<div class="a" style="left:204px;top:262.0px;font-size:30px;line-height:40px;color:#fff;font-weight:normal;width:64px;text-align:center;-webkit-text-stroke:0.3px #fff">1</div>
<div class="a" style="left:286px;top:262.5px;font-size:32px;line-height:40px;color:#222;font-weight:normal;">院校偏好</div>
<div class="a" style="left:788px;top:248px;width:64px;height:64px;background:#f0f0f0;border-radius:50%"></div>
<div class="a" style="left:788px;top:262.0px;font-size:30px;line-height:40px;color:#333;font-weight:normal;width:64px;text-align:center;-webkit-text-stroke:0.3px #333">2</div>
<div class="a" style="left:870px;top:262.5px;font-size:32px;line-height:40px;color:#8c8c8c;font-weight:normal;">专业偏好</div>
<div class="a" style="left:1372px;top:248px;width:64px;height:64px;background:#f0f0f0;border-radius:50%"></div>
<div class="a" style="left:1372px;top:262.0px;font-size:30px;line-height:40px;color:#333;font-weight:normal;width:64px;text-align:center;-webkit-text-stroke:0.3px #333">3</div>
<div class="a" style="left:1454px;top:262.5px;font-size:32px;line-height:40px;color:#8c8c8c;font-weight:normal;">高级筛选</div>
<div class="a" style="left:1956px;top:248px;width:64px;height:64px;background:#f0f0f0;border-radius:50%"></div>
<div class="a" style="left:1956px;top:262.0px;font-size:30px;line-height:40px;color:#333;font-weight:normal;width:64px;text-align:center;-webkit-text-stroke:0.3px #333">4</div>
<div class="a" style="left:2038px;top:262.5px;font-size:32px;line-height:40px;color:#8c8c8c;font-weight:normal;">配置策略</div>
<svg style="left:598px;top:262px" width="20" height="36" viewBox="0 0 20 36"><path d="M2 2L17 18L2 34" fill="none" stroke="#bdbdbd" stroke-width="2.4" stroke-linecap="round" stroke-linejoin="round"/></svg>
<svg style="left:1182px;top:262px" width="20" height="36" viewBox="0 0 20 36"><path d="M2 2L17 18L2 34" fill="none" stroke="#bdbdbd" stroke-width="2.4" stroke-linecap="round" stroke-linejoin="round"/></svg>
<svg style="left:1766px;top:262px" width="20" height="36" viewBox="0 0 20 36"><path d="M2 2L17 18L2 34" fill="none" stroke="#bdbdbd" stroke-width="2.4" stroke-linecap="round" stroke-linejoin="round"/></svg>
<div class="a" style="left:48px;top:332px;width:552px;height:4px;background:#7b57f2"></div>
<div class="a" style="left:48px;top:370.0px;font-size:28px;line-height:40px;color:#8c8c8c;font-weight:normal;">院校区域</div>
<div class="a" style="left:293px;top:370.0px;font-size:28px;line-height:40px;color:#7b57f2;font-weight:normal;">不限</div>
<div class="a" style="left:448px;top:370.0px;font-size:28px;line-height:40px;color:#222;font-weight:normal;">北京</div>
<svg style="left:520px;top:383.0px" width="16" height="10" viewBox="0 0 16 10"><path d="M1.2 1.2L7.6 7.6L14 1.2" fill="none" stroke="#a3a3a3" stroke-width="1.9" stroke-linecap="round" stroke-linejoin="round"/></svg>
<div class="a" style="left:634px;top:370.0px;font-size:28px;line-height:40px;color:#222;font-weight:normal;">天津</div>
<svg style="left:706px;top:383.0px" width="16" height="10" viewBox="0 0 16 10"><path d="M1.2 1.2L7.6 7.6L14 1.2" fill="none" stroke="#a3a3a3" stroke-width="1.9" stroke-linecap="round" stroke-linejoin="round"/></svg>
<div class="a" style="left:820px;top:370.0px;font-size:28px;line-height:40px;color:#222;font-weight:normal;">河北</div>
<svg style="left:892px;top:383.0px" width="16" height="10" viewBox="0 0 16 10"><path d="M1.2 1.2L7.6 7.6L14 1.2" fill="none" stroke="#a3a3a3" stroke-width="1.9" stroke-linecap="round" stroke-linejoin="round"/></svg>
<div class="a" style="left:1006px;top:370.0px;font-size:28px;line-height:40px;color:#222;font-weight:normal;">山西</div>
<svg style="left:1078px;top:383.0px" width="16" height="10" viewBox="0 0 16 10"><path d="M1.2 1.2L7.6 7.6L14 1.2" fill="none" stroke="#a3a3a3" stroke-width="1.9" stroke-linecap="round" stroke-linejoin="round"/></svg>
<div class="a" style="left:1192px;top:370.0px;font-size:28px;line-height:40px;color:#222;font-weight:normal;">内蒙古</div>
<svg style="left:1292px;top:383.0px" width="16" height="10" viewBox="0 0 16 10"><path d="M1.2 1.2L7.6 7.6L14 1.2" fill="none" stroke="#a3a3a3" stroke-width="1.9" stroke-linecap="round" stroke-linejoin="round"/></svg>
<div class="a" style="left:1406px;top:370.0px;font-size:28px;line-height:40px;color:#222;font-weight:normal;">辽宁</div>
<svg style="left:1478px;top:383.0px" width="16" height="10" viewBox="0 0 16 10"><path d="M1.2 1.2L7.6 7.6L14 1.2" fill="none" stroke="#a3a3a3" stroke-width="1.9" stroke-linecap="round" stroke-linejoin="round"/></svg>
<div class="a" style="left:1592px;top:370.0px;font-size:28px;line-height:40px;color:#222;font-weight:normal;">吉林</div>
<svg style="left:1664px;top:383.0px" width="16" height="10" viewBox="0 0 16 10"><path d="M1.2 1.2L7.6 7.6L14 1.2" fill="none" stroke="#a3a3a3" stroke-width="1.9" stroke-linecap="round" stroke-linejoin="round"/></svg>
<div class="a" style="left:1778px;top:370.0px;font-size:28px;line-height:40px;color:#222;font-weight:normal;">黑龙江</div>
<svg style="left:1878px;top:383.0px" width="16" height="10" viewBox="0 0 16 10"><path d="M1.2 1.2L7.6 7.6L14 1.2" fill="none" stroke="#a3a3a3" stroke-width="1.9" stroke-linecap="round" stroke-linejoin="round"/></svg>
<div class="a" style="left:1990px;top:370.0px;font-size:28px;line-height:40px;color:#222;font-weight:normal;">上海</div>
<svg style="left:2062px;top:383.0px" width="16" height="10" viewBox="0 0 16 10"><path d="M1.2 1.2L7.6 7.6L14 1.2" fill="none" stroke="#a3a3a3" stroke-width="1.9" stroke-linecap="round" stroke-linejoin="round"/></svg>
<div class="a" style="left:2176px;top:370.0px;font-size:28px;line-height:40px;color:#222;font-weight:normal;">江苏</div>
<svg style="left:2248px;top:383.0px" width="16" height="10" viewBox="0 0 16 10"><path d="M1.2 1.2L7.6 7.6L14 1.2" fill="none" stroke="#a3a3a3" stroke-width="1.9" stroke-linecap="round" stroke-linejoin="round"/></svg>
<div class="a" style="left:293px;top:457.5px;font-size:28px;line-height:40px;color:#222;font-weight:normal;">浙江</div>
<svg style="left:365px;top:470.5px" width="16" height="10" viewBox="0 0 16 10"><path d="M1.2 1.2L7.6 7.6L14 1.2" fill="none" stroke="#a3a3a3" stroke-width="1.9" stroke-linecap="round" stroke-linejoin="round"/></svg>
<div class="a" style="left:479px;top:457.5px;font-size:28px;line-height:40px;color:#222;font-weight:normal;">安徽</div>
<svg style="left:551px;top:470.5px" width="16" height="10" viewBox="0 0 16 10"><path d="M1.2 1.2L7.6 7.6L14 1.2" fill="none" stroke="#a3a3a3" stroke-width="1.9" stroke-linecap="round" stroke-linejoin="round"/></svg>
<div class="a" style="left:665px;top:457.5px;font-size:28px;line-height:40px;color:#222;font-weight:normal;">福建</div>
<svg style="left:737px;top:470.5px" width="16" height="10" viewBox="0 0 16 10"><path d="M1.2 1.2L7.6 7.6L14 1.2" fill="none" stroke="#a3a3a3" stroke-width="1.9" stroke-linecap="round" stroke-linejoin="round"/></svg>
<div class="a" style="left:851px;top:457.5px;font-size:28px;line-height:40px;color:#222;font-weight:normal;">江西</div>
<svg style="left:923px;top:470.5px" width="16" height="10" viewBox="0 0 16 10"><path d="M1.2 1.2L7.6 7.6L14 1.2" fill="none" stroke="#a3a3a3" stroke-width="1.9" stroke-linecap="round" stroke-linejoin="round"/></svg>
<div class="a" style="left:1037px;top:457.5px;font-size:28px;line-height:40px;color:#222;font-weight:normal;">山东</div>
<svg style="left:1109px;top:470.5px" width="16" height="10" viewBox="0 0 16 10"><path d="M1.2 1.2L7.6 7.6L14 1.2" fill="none" stroke="#a3a3a3" stroke-width="1.9" stroke-linecap="round" stroke-linejoin="round"/></svg>
<div class="a" style="left:1223px;top:457.5px;font-size:28px;line-height:40px;color:#222;font-weight:normal;">河南</div>
<svg style="left:1295px;top:470.5px" width="16" height="10" viewBox="0 0 16 10"><path d="M1.2 1.2L7.6 7.6L14 1.2" fill="none" stroke="#a3a3a3" stroke-width="1.9" stroke-linecap="round" stroke-linejoin="round"/></svg>
<div class="a" style="left:1409px;top:457.5px;font-size:28px;line-height:40px;color:#222;font-weight:normal;">湖北</div>
<svg style="left:1481px;top:470.5px" width="16" height="10" viewBox="0 0 16 10"><path d="M1.2 1.2L7.6 7.6L14 1.2" fill="none" stroke="#a3a3a3" stroke-width="1.9" stroke-linecap="round" stroke-linejoin="round"/></svg>
<div class="a" style="left:1595px;top:457.5px;font-size:28px;line-height:40px;color:#222;font-weight:normal;">湖南</div>
<svg style="left:1667px;top:470.5px" width="16" height="10" viewBox="0 0 16 10"><path d="M1.2 1.2L7.6 7.6L14 1.2" fill="none" stroke="#a3a3a3" stroke-width="1.9" stroke-linecap="round" stroke-linejoin="round"/></svg>
<div class="a" style="left:1781px;top:457.5px;font-size:28px;line-height:40px;color:#222;font-weight:normal;">广东</div>
<svg style="left:1853px;top:470.5px" width="16" height="10" viewBox="0 0 16 10"><path d="M1.2 1.2L7.6 7.6L14 1.2" fill="none" stroke="#a3a3a3" stroke-width="1.9" stroke-linecap="round" stroke-linejoin="round"/></svg>
<div class="a" style="left:1967px;top:457.5px;font-size:28px;line-height:40px;color:#222;font-weight:normal;">广西</div>
<svg style="left:2039px;top:470.5px" width="16" height="10" viewBox="0 0 16 10"><path d="M1.2 1.2L7.6 7.6L14 1.2" fill="none" stroke="#a3a3a3" stroke-width="1.9" stroke-linecap="round" stroke-linejoin="round"/></svg>
<div class="a" style="left:2153px;top:457.5px;font-size:28px;line-height:40px;color:#222;font-weight:normal;">海南</div>
<svg style="left:2225px;top:470.5px" width="16" height="10" viewBox="0 0 16 10"><path d="M1.2 1.2L7.6 7.6L14 1.2" fill="none" stroke="#a3a3a3" stroke-width="1.9" stroke-linecap="round" stroke-linejoin="round"/></svg>
<div class="a" style="left:293px;top:545.5px;font-size:28px;line-height:40px;color:#222;font-weight:normal;">重庆</div>
<svg style="left:365px;top:558.5px" width="16" height="10" viewBox="0 0 16 10"><path d="M1.2 1.2L7.6 7.6L14 1.2" fill="none" stroke="#a3a3a3" stroke-width="1.9" stroke-linecap="round" stroke-linejoin="round"/></svg>
<div class="a" style="left:479px;top:545.5px;font-size:28px;line-height:40px;color:#222;font-weight:normal;">四川</div>
<svg style="left:551px;top:558.5px" width="16" height="10" viewBox="0 0 16 10"><path d="M1.2 1.2L7.6 7.6L14 1.2" fill="none" stroke="#a3a3a3" stroke-width="1.9" stroke-linecap="round" stroke-linejoin="round"/></svg>
<div class="a" style="left:665px;top:545.5px;font-size:28px;line-height:40px;color:#222;font-weight:normal;">贵州</div>
<svg style="left:737px;top:558.5px" width="16" height="10" viewBox="0 0 16 10"><path d="M1.2 1.2L7.6 7.6L14 1.2" fill="none" stroke="#a3a3a3" stroke-width="1.9" stroke-linecap="round" stroke-linejoin="round"/></svg>
<div class="a" style="left:851px;top:545.5px;font-size:28px;line-height:40px;color:#222;font-weight:normal;">云南</div>
<svg style="left:923px;top:558.5px" width="16" height="10" viewBox="0 0 16 10"><path d="M1.2 1.2L7.6 7.6L14 1.2" fill="none" stroke="#a3a3a3" stroke-width="1.9" stroke-linecap="round" stroke-linejoin="round"/></svg>
<div class="a" style="left:1037px;top:545.5px;font-size:28px;line-height:40px;color:#222;font-weight:normal;">西藏</div>
<svg style="left:1109px;top:558.5px" width="16" height="10" viewBox="0 0 16 10"><path d="M1.2 1.2L7.6 7.6L14 1.2" fill="none" stroke="#a3a3a3" stroke-width="1.9" stroke-linecap="round" stroke-linejoin="round"/></svg>
<div class="a" style="left:1223px;top:545.5px;font-size:28px;line-height:40px;color:#222;font-weight:normal;">陕西</div>
<svg style="left:1295px;top:558.5px" width="16" height="10" viewBox="0 0 16 10"><path d="M1.2 1.2L7.6 7.6L14 1.2" fill="none" stroke="#a3a3a3" stroke-width="1.9" stroke-linecap="round" stroke-linejoin="round"/></svg>
<div class="a" style="left:1409px;top:545.5px;font-size:28px;line-height:40px;color:#222;font-weight:normal;">甘肃</div>
<svg style="left:1481px;top:558.5px" width="16" height="10" viewBox="0 0 16 10"><path d="M1.2 1.2L7.6 7.6L14 1.2" fill="none" stroke="#a3a3a3" stroke-width="1.9" stroke-linecap="round" stroke-linejoin="round"/></svg>
<div class="a" style="left:1595px;top:545.5px;font-size:28px;line-height:40px;color:#222;font-weight:normal;">青海</div>
<svg style="left:1667px;top:558.5px" width="16" height="10" viewBox="0 0 16 10"><path d="M1.2 1.2L7.6 7.6L14 1.2" fill="none" stroke="#a3a3a3" stroke-width="1.9" stroke-linecap="round" stroke-linejoin="round"/></svg>
<div class="a" style="left:1781px;top:545.5px;font-size:28px;line-height:40px;color:#222;font-weight:normal;">宁夏</div>
<svg style="left:1853px;top:558.5px" width="16" height="10" viewBox="0 0 16 10"><path d="M1.2 1.2L7.6 7.6L14 1.2" fill="none" stroke="#a3a3a3" stroke-width="1.9" stroke-linecap="round" stroke-linejoin="round"/></svg>
<div class="a" style="left:1967px;top:545.5px;font-size:28px;line-height:40px;color:#222;font-weight:normal;">新疆</div>
<svg style="left:2039px;top:558.5px" width="16" height="10" viewBox="0 0 16 10"><path d="M1.2 1.2L7.6 7.6L14 1.2" fill="none" stroke="#a3a3a3" stroke-width="1.9" stroke-linecap="round" stroke-linejoin="round"/></svg>
<div class="a" style="left:2153px;top:545.5px;font-size:28px;line-height:40px;color:#222;font-weight:normal;">全部</div>
<div class="a" style="left:48px;top:642.0px;font-size:28px;line-height:40px;color:#8c8c8c;font-weight:normal;">院校特色</div>
<div class="a" style="left:293px;top:642.0px;font-size:28px;line-height:40px;color:#7b57f2;font-weight:normal;">不限</div>
<div class="a" style="left:448px;top:642.0px;font-size:30px;line-height:40px;color:#222;font-weight:normal;">985</div>
<div class="a" style="left:602px;top:642.0px;font-size:30px;line-height:40px;color:#222;font-weight:normal;">211</div>
<div class="a" style="left:747px;top:642.0px;font-size:28px;line-height:40px;color:#222;font-weight:normal;">双一流</div>
<div class="a" style="left:929px;top:642.0px;font-size:28px;line-height:40px;color:#222;font-weight:normal;">101计划</div>
<div class="a" style="left:1125px;top:642.0px;font-size:28px;line-height:40px;color:#222;font-weight:normal;">国重点</div>
<div class="a" style="left:1308px;top:642.0px;font-size:28px;line-height:40px;color:#222;font-weight:normal;">省重点</div>
<div class="a" style="left:1490px;top:642.0px;font-size:28px;line-height:40px;color:#222;font-weight:normal;">省属</div>
<div class="a" style="left:1643px;top:642.0px;font-size:28px;line-height:40px;color:#222;font-weight:normal;">省部共建</div>
<div class="a" style="left:1853px;top:642.0px;font-size:28px;line-height:40px;color:#222;font-weight:normal;">教育部直属</div>
<div class="a" style="left:2092px;top:642.0px;font-size:28px;line-height:40px;color:#222;font-weight:normal;">部委院校</div>
<div class="a" style="left:293px;top:729.5px;font-size:28px;line-height:40px;color:#222;font-weight:normal;">研究生院</div>
<div class="a" style="left:503px;top:729.5px;font-size:28px;line-height:40px;color:#222;font-weight:normal;">硕士点</div>
<div class="a" style="left:685px;top:729.5px;font-size:28px;line-height:40px;color:#222;font-weight:normal;">博士点</div>
<div class="a" style="left:867px;top:729.5px;font-size:28px;line-height:40px;color:#222;font-weight:normal;">保研资格</div>
<div class="a" style="left:1083px;top:729.5px;font-size:30px;line-height:40px;color:#222;font-weight:normal;">C9</div>
<div class="a" style="left:1236px;top:729.5px;font-size:30px;line-height:40px;color:#222;font-weight:normal;">E9</div>
<div class="a" style="left:1377px;top:729.5px;font-size:28px;line-height:40px;color:#222;font-weight:normal;">两电一邮</div>
<div class="a" style="left:1587px;top:729.5px;font-size:28px;line-height:40px;color:#222;font-weight:normal;">八大美院</div>
<div class="a" style="left:1797px;top:729.5px;font-size:28px;line-height:40px;color:#222;font-weight:normal;">国防七子</div>
<div class="a" style="left:2007px;top:729.5px;font-size:28px;line-height:40px;color:#222;font-weight:normal;">五院四系</div>
<div class="a" style="left:293px;top:817.5px;font-size:28px;line-height:40px;color:#222;font-weight:normal;">强基计划</div>
<div class="a" style="left:503px;top:817.5px;font-size:28px;line-height:40px;color:#222;font-weight:normal;">香港高才通</div>
<div class="a" style="left:741px;top:817.5px;font-size:28px;line-height:40px;color:#222;font-weight:normal;">国家级示范</div>
<div class="a" style="left:979px;top:817.5px;font-size:28px;line-height:40px;color:#222;font-weight:normal;">国家级骨干</div>
<div class="a" style="left:1217px;top:817.5px;font-size:28px;line-height:40px;color:#222;font-weight:normal;">双高计划</div>
<div class="a" style="left:1427px;top:817.5px;font-size:28px;line-height:40px;color:#222;font-weight:normal;">学徒制试点</div>
<div class="a" style="left:1665px;top:817.5px;font-size:28px;line-height:40px;color:#222;font-weight:normal;">专本兼招</div>
<div class="a" style="left:1875px;top:817.5px;font-size:28px;line-height:40px;color:#222;font-weight:normal;">中外合作</div>
<div class="a" style="left:2085px;top:817.5px;font-size:28px;line-height:40px;color:#222;font-weight:normal;">港澳台地区合作</div>
<div class="a" style="left:48px;top:914.5px;font-size:28px;line-height:40px;color:#8c8c8c;font-weight:normal;">院校类型</div>
<div class="a" style="left:293px;top:914.5px;font-size:28px;line-height:40px;color:#7b57f2;font-weight:normal;">不限</div>
<div class="a" style="left:448px;top:914.5px;font-size:28px;line-height:40px;color:#222;font-weight:normal;">综合</div>
<div class="a" style="left:602px;top:914.5px;font-size:28px;line-height:40px;color:#222;font-weight:normal;">理工</div>
<div class="a" style="left:756px;top:914.5px;font-size:28px;line-height:40px;color:#222;font-weight:normal;">农林</div>
<div class="a" style="left:910px;top:914.5px;font-size:28px;line-height:40px;color:#222;font-weight:normal;">医药</div>
<div class="a" style="left:1064px;top:914.5px;font-size:28px;line-height:40px;color:#222;font-weight:normal;">师范</div>
<div class="a" style="left:1218px;top:914.5px;font-size:28px;line-height:40px;color:#222;font-weight:normal;">语言</div>
<div class="a" style="left:1371px;top:914.5px;font-size:28px;line-height:40px;color:#222;font-weight:normal;">财经</div>
<div class="a" style="left:1525px;top:914.5px;font-size:28px;line-height:40px;color:#222;font-weight:normal;">政法</div>
<div class="a" style="left:1679px;top:914.5px;font-size:28px;line-height:40px;color:#222;font-weight:normal;">体育</div>
<div class="a" style="left:1834px;top:914.5px;font-size:28px;line-height:40px;color:#222;font-weight:normal;">艺术</div>
<div class="a" style="left:1989px;top:914.5px;font-size:28px;line-height:40px;color:#222;font-weight:normal;">民族</div>
<div class="a" style="left:2142px;top:914.5px;font-size:28px;line-height:40px;color:#222;font-weight:normal;">军事</div>
<div class="a" style="left:293px;top:1000.5px;font-size:28px;line-height:40px;color:#222;font-weight:normal;">其他</div>
<div class="a" style="left:48px;top:1097.5px;font-size:28px;line-height:40px;color:#8c8c8c;font-weight:normal;">院校层次</div>
<div class="a" style="left:293px;top:1097.5px;font-size:28px;line-height:40px;color:#222;font-weight:normal;">本科</div>
<div class="a" style="left:448px;top:1097.5px;font-size:28px;line-height:40px;color:#222;font-weight:normal;">专科</div>
<div class="a" style="left:752px;top:1097.5px;font-size:28px;line-height:40px;color:#222;font-weight:normal;">公办</div>
<div class="a" style="left:907px;top:1097.5px;font-size:28px;line-height:40px;color:#222;font-weight:normal;">民办</div>
<div class="a" style="left:1060px;top:1097.5px;font-size:28px;line-height:40px;color:#222;font-weight:normal;">中外/港澳合作院校</div>
<div class="a" style="left:1539px;top:1097.5px;font-size:28px;line-height:40px;color:#222;font-weight:normal;">新增院校</div>
<div class="a" style="left:1749px;top:1097.5px;font-size:28px;line-height:40px;color:#222;font-weight:normal;">非新增院校</div>
<div class="a" style="left:626px;top:1103px;width:3px;height:26px;background:#b5b5b5"></div>
<div class="a" style="left:1414px;top:1103px;width:3px;height:26px;background:#b5b5b5"></div>
<div class="a" style="left:48px;top:1368px;width:2304px;height:112px;border-radius:16px;background:linear-gradient(90deg,#f3effe 0%,#f5f2fe 30%,#f8f6fe 48%,#fcfbff 66%,#ffffff 78%)"></div>
<div class="a" style="left:280px;top:1404.5px;font-size:32px;line-height:40px;color:#7b57f2;font-weight:normal;">根据选择的意向，可推荐</div>
<div class="a" style="left:655px;top:1405.5px;font-size:42px;line-height:40px;color:#7b57f2;font-weight:bold;">140</div>
<div class="a" style="left:747px;top:1404.5px;font-size:32px;line-height:40px;color:#7b57f2;font-weight:normal;">个志愿：</div>
<div class="a" style="left:883px;top:1404.5px;font-size:32px;line-height:40px;color:#7b57f2;font-weight:normal;">冲</div>
<div class="a" style="left:938px;top:1404.5px;font-size:32px;line-height:40px;color:#7b57f2;font-weight:normal;">21</div>
<div class="a" style="left:1001px;top:1410px;width:3px;height:31px;background:#7b57f2"></div>
<div class="a" style="left:1030px;top:1404.5px;font-size:32px;line-height:40px;color:#7b57f2;font-weight:normal;">稳</div>
<div class="a" style="left:1085px;top:1404.5px;font-size:32px;line-height:40px;color:#7b57f2;font-weight:normal;">33</div>
<div class="a" style="left:1148px;top:1410px;width:3px;height:31px;background:#7b57f2"></div>
<div class="a" style="left:1176px;top:1404.5px;font-size:32px;line-height:40px;color:#7b57f2;font-weight:normal;">保</div>
<div class="a" style="left:1232px;top:1404.5px;font-size:32px;line-height:40px;color:#7b57f2;font-weight:normal;">86</div>
<div class="a" style="left:2172px;top:1392px;width:148px;height:64px;background:#7b57f2;border-radius:12px;box-shadow:0 4px 0 rgba(123,87,242,0.1)"></div>
<div class="a" style="left:2204px;top:1405.5px;font-size:28px;line-height:40px;color:#fff;font-weight:normal;">下一步</div>
<svg style="left:78px;top:1306px" width="180" height="174" viewBox="0 0 180 174">
<defs>
<linearGradient id="shirt" x1="0" y1="0" x2="1" y2="1"><stop offset="0" stop-color="#fafafa"/><stop offset="0.6" stop-color="#eeeeee"/><stop offset="1" stop-color="#d9d9d9"/></linearGradient>
<linearGradient id="skin" x1="0" y1="0" x2="1" y2="1"><stop offset="0" stop-color="#f6d9c4"/><stop offset="1" stop-color="#e4b293"/></linearGradient>
</defs>
<path d="M30 174 L32 136 Q40 122 66 110 L76 104 L100 98 L116 108 Q140 118 146 128 Q156 140 160 174 Z" fill="url(#shirt)"/>
<path d="M64 78 Q69 98 66 106 L78 118 L106 98 Q100 90 100 78 Z" fill="#e8b898"/>
<path d="M67 104 L76 96 L80 132 L74 128 Z" fill="#f4f4f4" stroke="#c8c8c8" stroke-width="0.8"/>
<path d="M76 106 L104 94 L112 104 L84 131 Z" fill="#f7f7f7" stroke="#bdbdbd" stroke-width="0.8"/>
<path d="M70 113 L78 113 L80 124 L79 140 L66 140 L68 124 Z" fill="#262626"/>
<ellipse cx="54.5" cy="64" rx="4" ry="8" fill="#eab592"/>
<ellipse cx="108" cy="64" rx="5.5" ry="9" fill="#e9b090"/>
<path d="M56 40 Q56 28 78 26 Q102 28 104 42 L103 70 Q100 88 90 94 Q80 98 72 94 Q60 86 57 70 Z" fill="url(#skin)"/>
<path d="M49 52 Q44 22 66 14 Q84 8 100 14 Q118 22 114 46 L112 60 L106 56 Q104 40 96 34 Q80 30 64 36 Q58 42 56 56 L52 56 Z" fill="#1b1b1b"/>
<path d="M58 48 Q64 45 72 47 M82 47 Q90 44 97 47" stroke="#2a2a2a" stroke-width="2" fill="none"/>
<circle cx="64.5" cy="58" r="8.5" fill="none" stroke="#4e5560" stroke-width="1.6"/>
<circle cx="87.5" cy="58" r="9" fill="none" stroke="#4e5560" stroke-width="1.6"/>
<path d="M73 57 Q76 55 78.5 57 M96.5 56 L108 54" stroke="#4e5560" stroke-width="1.4" fill="none"/>
<circle cx="65" cy="57" r="1.6" fill="#222"/><circle cx="87" cy="57" r="1.6" fill="#222"/>
<path d="M70 78 Q77 81 84 78" stroke="#c0685a" stroke-width="1.8" fill="none"/>
<path d="M13 142 L34 143 L45 174 L23 174 Z" fill="#66726b"/>
<path d="M33 143 L105 136 L114 174 L44 174 Z" fill="#1f2b25"/>
<path d="M34 143 L105 136" stroke="#cfd6d0" stroke-width="1.6"/>
<path d="M52 174 Q52 168 56 166 Q60 168 60 174 Z" fill="#e9b090"/>
</svg>
</div>
</body></html>
